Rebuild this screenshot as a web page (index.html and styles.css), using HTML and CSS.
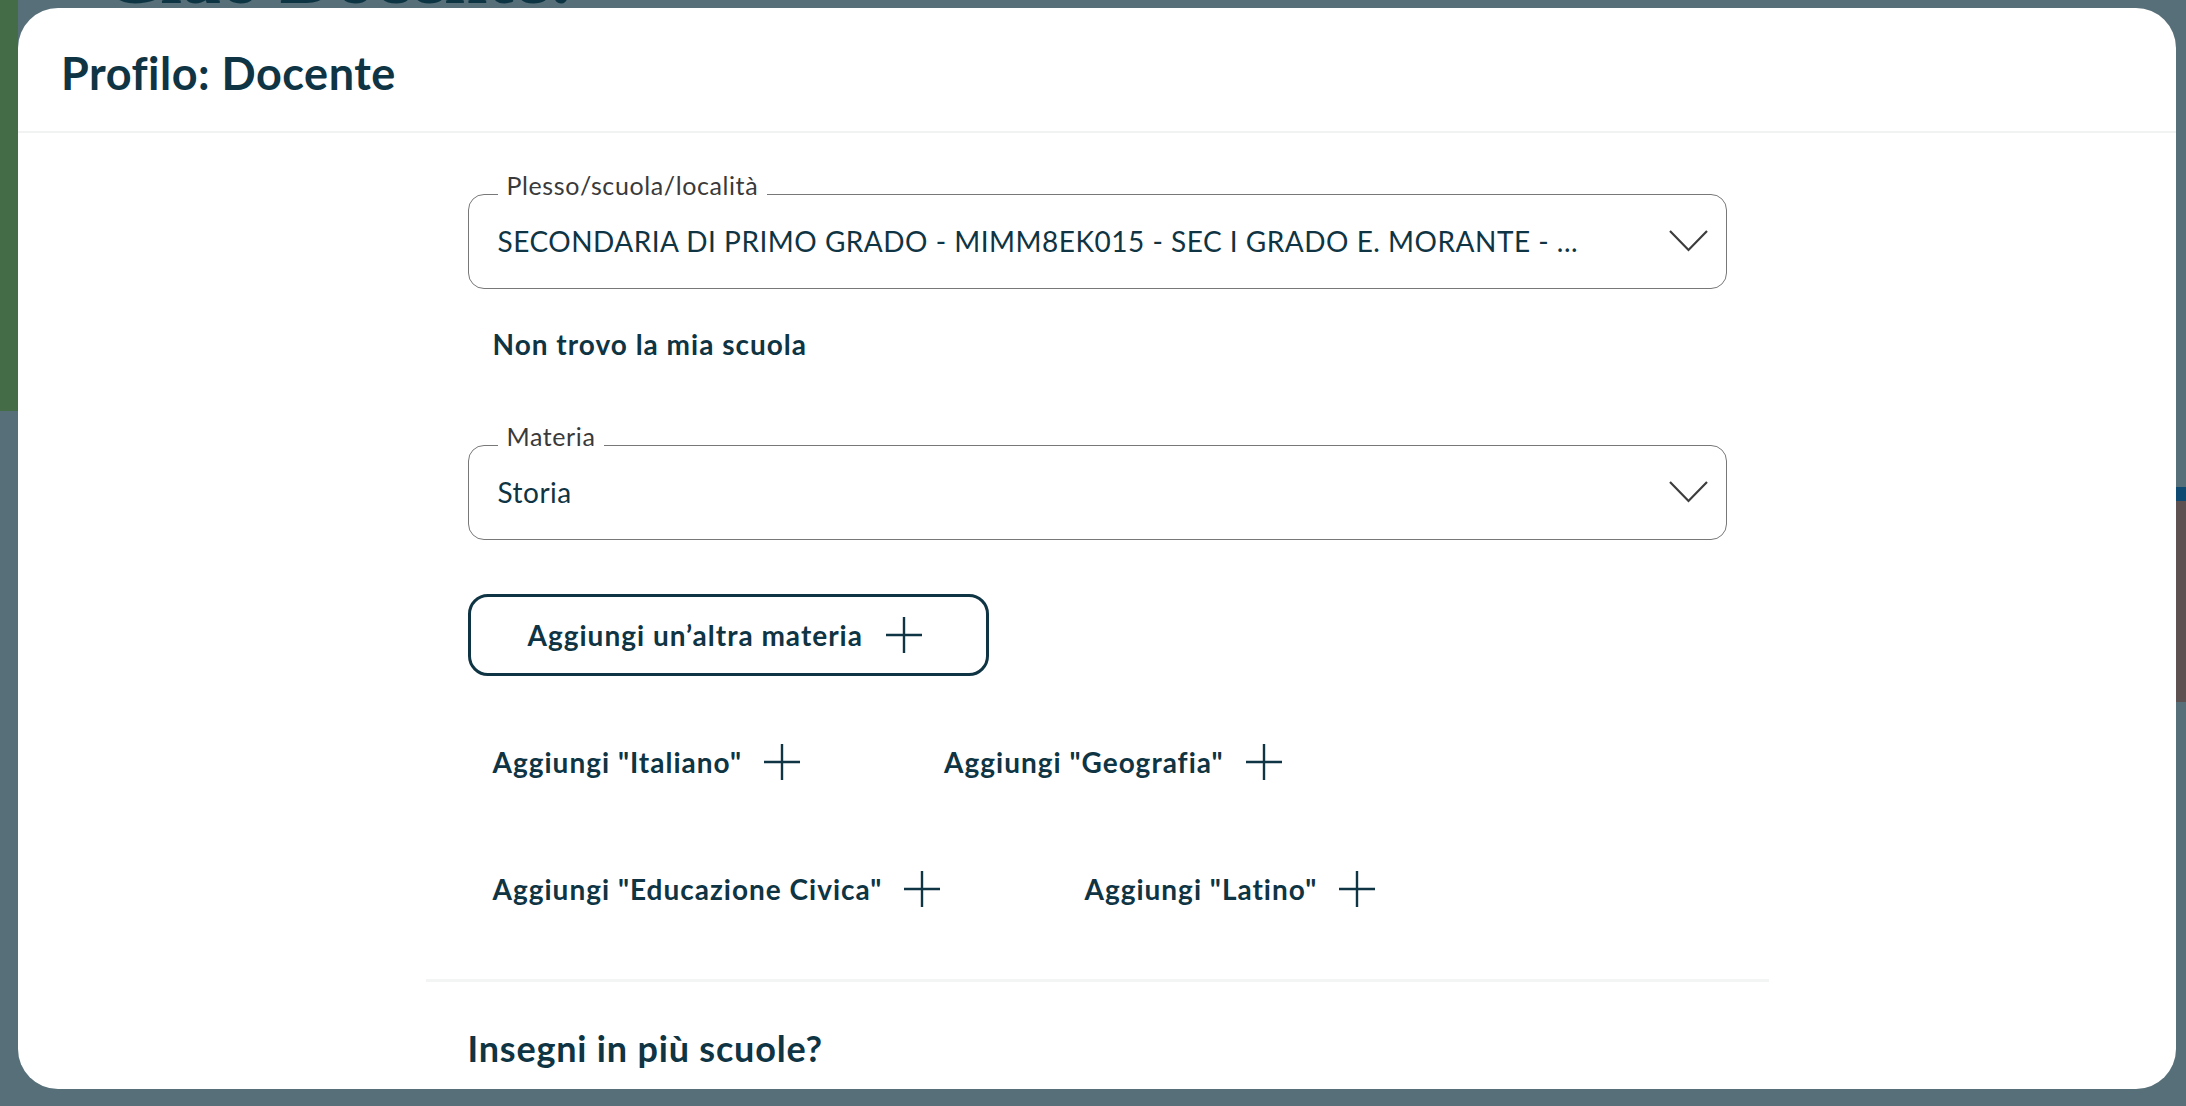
FILE: index.html
```html
<!DOCTYPE html>
<html lang="it">
<head>
  <meta charset="UTF-8">
  <title>Profilo: Docente</title>
  <link rel="stylesheet" href="styles.css">
</head>
<body>
  <div class="page-side"></div>
  <h1 class="page-title">Ciao Docente!</h1>
  <div class="page-blob"></div>

  <div class="modal">
    <header class="modal-head">
      <h2>Profilo: Docente</h2>
    </header>

    <div class="modal-body">
      <div class="form">
        <fieldset class="field">
          <legend>Plesso/scuola/località</legend>
          <span class="value">SECONDARIA DI PRIMO GRADO - MIMM8EK015 - SEC I GRADO E. MORANTE - ...</span>
          <svg class="chevron" viewBox="0 0 39 22"><polyline points="1,1 19.5,20 38,1" fill="none" stroke="#3d3d3d" stroke-width="2.2"/></svg>
        </fieldset>

        <button class="link-btn">Non trovo la mia scuola</button>

        <fieldset class="field field-2">
          <legend>Materia</legend>
          <span class="value">Storia</span>
          <svg class="chevron" viewBox="0 0 39 22"><polyline points="1,1 19.5,20 38,1" fill="none" stroke="#3d3d3d" stroke-width="2.2"/></svg>
        </fieldset>

        <button class="add-btn">
          Aggiungi un’altra materia
          <svg class="plus" viewBox="0 0 36 36"><path d="M18 0V36M0 18H36" stroke="currentColor" stroke-width="2.4"/></svg>
        </button>

        <div class="suggestions">
          <button class="suggest">Aggiungi "Italiano" <svg class="plus" viewBox="0 0 36 36"><path d="M18 0V36M0 18H36" stroke="currentColor" stroke-width="2.4"/></svg></button>
          <button class="suggest">Aggiungi "Geografia" <svg class="plus" viewBox="0 0 36 36"><path d="M18 0V36M0 18H36" stroke="currentColor" stroke-width="2.4"/></svg></button>
          <button class="suggest">Aggiungi "Educazione Civica" <svg class="plus" viewBox="0 0 36 36"><path d="M18 0V36M0 18H36" stroke="currentColor" stroke-width="2.4"/></svg></button>
          <button class="suggest">Aggiungi "Latino" <svg class="plus" viewBox="0 0 36 36"><path d="M18 0V36M0 18H36" stroke="currentColor" stroke-width="2.4"/></svg></button>
        </div>
      </div>

      <hr class="divider">

      <h3 class="more">Insegni in più scuole?</h3>
    </div>
  </div>
</body>
</html>
```

FILE: styles.css
```css
* { box-sizing: border-box; }
body { margin: 0; height: 1106px; overflow: hidden; position: relative; background: #566f79; font-family: Lato, "Noto Sans", sans-serif; color: #0f3443; }

/* page behind the dialog */
.page-side { position: absolute; left: 0; top: 0; width: 18px; height: 411px; background: #446c46; }
.page-title { position: absolute; left: 104px; top: -68px; margin: 0; font: bold 78px/90px "Liberation Serif", serif; color: #0d3443; }
.page-blob { position: absolute; right: 0; top: 487px; width: 10px; height: 215px; background: #5e5152; border-top: 14px solid #0f4a72; }

/* dialog */
.modal { position: absolute; left: 18px; top: 8px; width: 2158px; height: 1081px; background: #fff; border-radius: 40px; overflow: hidden; }
.modal-head { height: 125px; padding: 6px 0 0 43px; display: flex; align-items: center; border-bottom: 2px solid #f1f2f2; }
.modal-head h2 { margin: 0; font-size: 45px; font-weight: 700; letter-spacing: 0.5px; }

.modal-body { width: 1343px; margin: 0 auto; padding-top: 38px; }
.form { padding: 0 42px; display: flex; flex-direction: column; align-items: flex-start; }

.field { width: 100%; margin: 0; min-width: 0; display: flex; align-items: center; border: 1px solid #787878; border-radius: 16px; padding: 7px 18px 30px 29px; }
.field legend { padding: 0 9px 18px; font-size: 25px; line-height: 28px; letter-spacing: 0.6px; color: #3a3a3a; }
.field .value { flex: 1; font-size: 28px; line-height: 34px; letter-spacing: 0.5px; white-space: nowrap; overflow: hidden; }
.field-2 { margin-top: 46px; }
.chevron { width: 39px; height: 22px; flex: none; }

button { font-family: inherit; color: inherit; background: none; cursor: pointer; font-size: 28px; font-weight: 700; letter-spacing: 1px; }

.link-btn { margin-top: 23px; height: 64px; padding: 0 25px; border: 0; }

.add-btn { margin-top: 54px; height: 82px; display: flex; align-items: center; gap: 23px; padding: 0 64px 0 57px; border: 3px solid #0f3443; border-radius: 20px; }
.plus { width: 36px; height: 36px; flex: none; }

.suggestions { width: 100%; margin-top: 45px; display: flex; flex-wrap: wrap; column-gap: 94px; row-gap: 45px; }
.suggest { height: 82px; display: flex; align-items: center; gap: 22px; padding: 0 25px; border: 0; }

.divider { height: 3px; margin: 49px 0 0; border: 0; background: #f3f4f4; }
.more { margin: 45px 42px 0; font-size: 36px; line-height: 42px; font-weight: 700; letter-spacing: 0.8px; }
```
